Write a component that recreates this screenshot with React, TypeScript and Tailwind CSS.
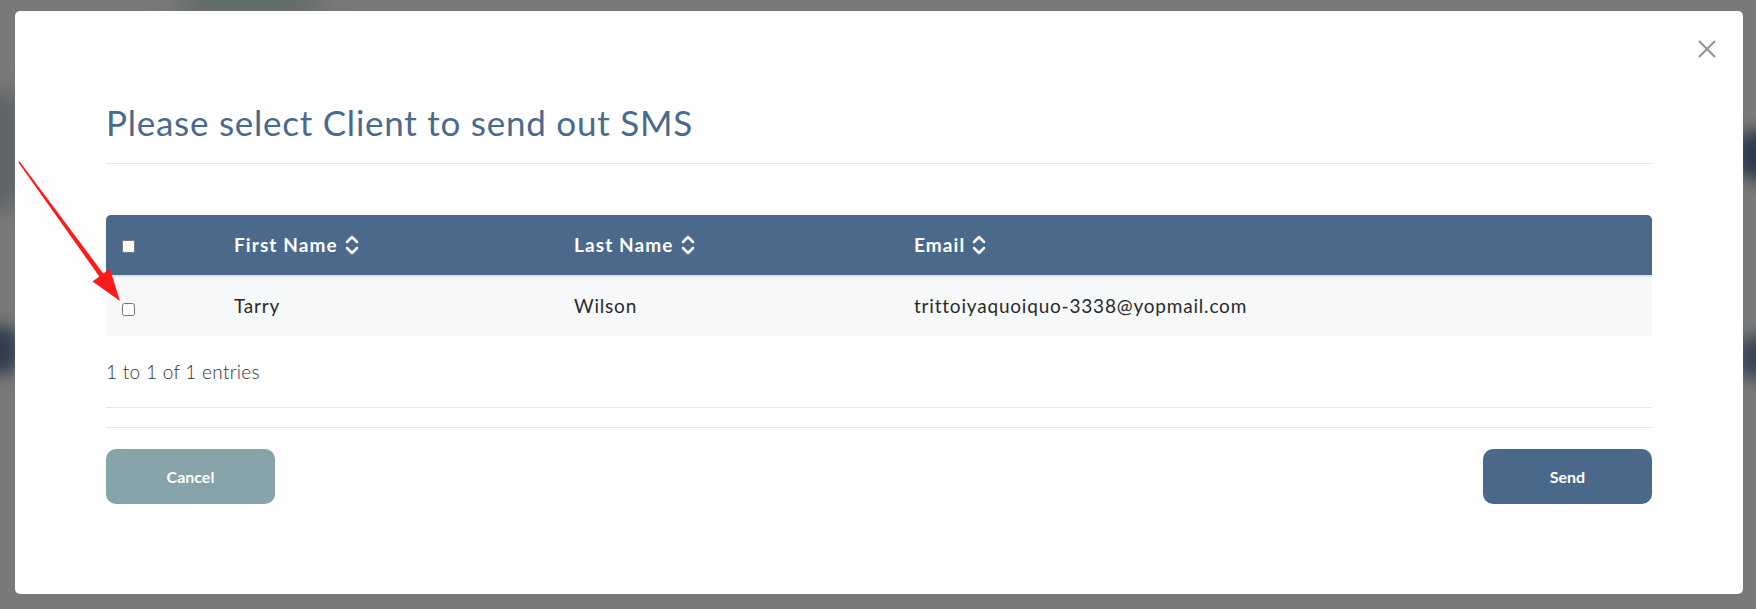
import { useState } from "react";

type Client = {
  id: number;
  firstName: string;
  lastName: string;
  email: string;
};

const clients: Client[] = [
  { id: 1, firstName: "Tarry", lastName: "Wilson", email: "trittoiyaquoiquo-3338@yopmail.com" },
];

const columns = ["First Name", "Last Name", "Email"];

function SortIcon() {
  return (
    <svg width="14" height="26" viewBox="0 0 14 26" fill="none" aria-hidden>
      <path d="M2 10L7 5L12 10" stroke="white" strokeWidth="2.5" strokeLinecap="round" strokeLinejoin="round" />
      <path d="M2 16L7 21L12 16" stroke="white" strokeWidth="2.5" strokeLinecap="round" strokeLinejoin="round" />
    </svg>
  );
}

function Backdrop() {
  // blurred page behind the overlay
  return (
    <div className="pointer-events-none absolute inset-0 overflow-hidden" aria-hidden>
      <div className="absolute left-[180px] top-[-20px] h-[40px] w-[140px] rounded-full bg-[#5f6b68] blur-[14px]" />
      <div className="absolute left-[-20px] top-[90px] h-[120px] w-[40px] rounded-full bg-[#5d6267] blur-[10px]" />
      <div className="absolute left-[-20px] top-[325px] h-[50px] w-[40px] rounded-full bg-[#2f3d4e] blur-[8px]" />
      <div className="absolute right-[-20px] top-[130px] h-[50px] w-[40px] rounded-full bg-[#2c3a4b] blur-[8px]" />
      <div className="absolute right-[-20px] top-[335px] h-[45px] w-[40px] rounded-full bg-[#3a4656] blur-[8px]" />
    </div>
  );
}

export default function App() {
  const [selected, setSelected] = useState<number[]>([]);
  const allChecked = selected.length === clients.length;

  const toggle = (id: number) =>
    setSelected((s) => (s.includes(id) ? s.filter((x) => x !== id) : [...s, id]));

  return (
    <div
      className="relative h-[609px] w-full overflow-hidden bg-[#797979] pl-[15px] pt-[11px]"
      style={{ fontFamily: "Lato, 'Noto Sans', sans-serif" }}
    >
      <Backdrop />

      <div className="relative h-[583px] w-[1728px] rounded-[5px] bg-white px-[91px] pt-[90px]">
        <button className="absolute right-[25px] top-[27px] p-[2px]" aria-label="Close">
          <svg width="18" height="18" viewBox="0 0 18 18" fill="none">
            <path d="M1.5 1.5L16.5 16.5M16.5 1.5L1.5 16.5" stroke="#8d939b" strokeWidth="2" strokeLinecap="round" />
          </svg>
        </button>

        <h2 className="border-b border-[#e4e6e8] pb-[20px] text-[35px] leading-[42px] font-normal tracking-[0.75px] text-[#4a6a8c]">
          Please select Client to send out SMS
        </h2>

        <div className="mt-[51px]">
          <div className="grid h-[62px] grid-cols-[128px_340px_340px_1fr] items-center rounded-t-[5px] border-b-2 border-[#dde3ea] bg-[#4b6a8b] text-[19px] font-bold tracking-[1.1px] text-white">
            <div className="pl-[16px] pt-[2px]">
              <input
                type="checkbox"
                checked={allChecked}
                onChange={() => setSelected(allChecked ? [] : clients.map((c) => c.id))}
                className="block size-[13px]"
              />
            </div>
            {columns.map((col) => (
              <div key={col} className="flex items-center gap-[7px]">
                <span>{col}</span>
                <SortIcon />
              </div>
            ))}
          </div>

          {clients.map((c) => (
            <div
              key={c.id}
              className="grid h-[59px] grid-cols-[128px_340px_340px_1fr] items-center bg-[#f7f8fa] text-[19px] tracking-[0.8px] text-[#2a2a2a]"
            >
              <div className="pl-[16px] pt-[6px]">
                <input
                  type="checkbox"
                  checked={selected.includes(c.id)}
                  onChange={() => toggle(c.id)}
                  className="block size-[13px]"
                />
              </div>
              <div>{c.firstName}</div>
              <div>{c.lastName}</div>
              <div>{c.email}</div>
            </div>
          ))}
        </div>

        <p className="mt-[24px] text-[19px] leading-[24px] font-light tracking-[0.3px] text-[#333]">1 to 1 of 1 entries</p>

        <div className="mt-[23px] h-[21px] border-y border-[#e4e6e8]" />

        <div className="mt-[21px] flex items-center justify-between">
          <button className="h-[55px] w-[169px] rounded-[10px] bg-[#85a3a8] text-[16px] font-bold text-white">
            Cancel
          </button>
          <button className="h-[55px] w-[169px] rounded-[10px] bg-[#4a6889] text-[16px] font-bold text-white">
            Send
          </button>
        </div>
      </div>

      {/* annotation arrow */}
      <svg className="pointer-events-none absolute left-0 top-0" width="160" height="320" viewBox="0 0 160 320" aria-hidden>
        <polygon points="18.4,162.4 19.6,161.6 104,274.5 100,277.5" fill="#ff1a1a" />
        <polygon points="120,301 92.5,281.5 109.8,268.8" fill="#ff1a1a" />
      </svg>
    </div>
  );
}
